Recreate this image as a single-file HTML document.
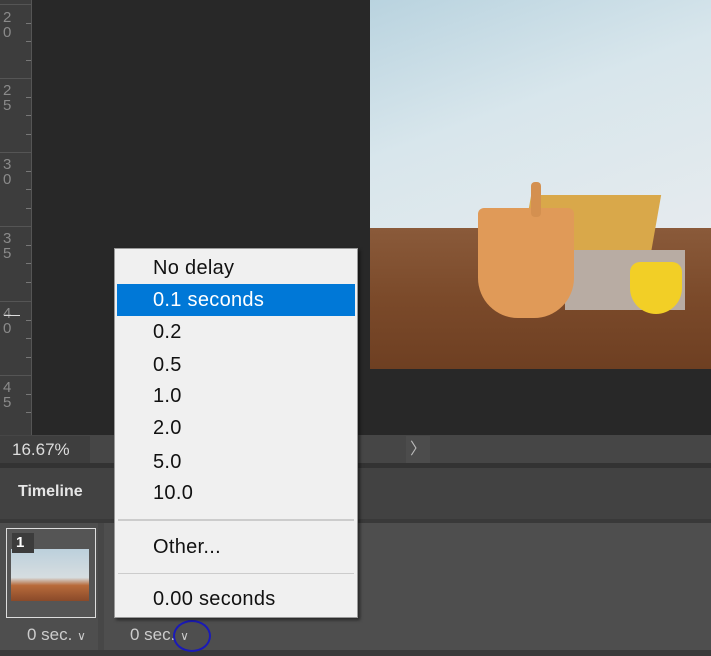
<!DOCTYPE html><html><head><style>
body{margin:0;width:711px;height:656px;overflow:hidden;background:#282828;font-family:"Liberation Sans",sans-serif;position:relative}
div{position:absolute;box-sizing:border-box}
.rl{color:#8a8a8a;font-size:15px;line-height:15px;left:3px;width:12px}
.tk{left:26px;width:5px;height:1px;background:#777}
.mj{left:0;width:32px;height:1px;background:#555}
.it{left:38px;font-size:20px;color:#111;height:32px;line-height:32px;letter-spacing:0.3px}
</style></head><body>
<div style="left:0;top:0;width:32px;height:435px;background:#3d3d3d"></div>
<div style="left:31px;top:0;width:1px;height:435px;background:#555"></div>
<div class="mj" style="top:4px"></div><div class="mj" style="top:78px"></div><div class="mj" style="top:152px"></div><div class="mj" style="top:226px"></div><div class="mj" style="top:301px"></div><div class="mj" style="top:375px"></div>
<div class="rl" style="top:10px">2<br>0</div><div class="rl" style="top:83px">2<br>5</div><div class="rl" style="top:157px">3<br>0</div><div class="rl" style="top:231px">3<br>5</div><div class="rl" style="top:306px">4<br>0</div><div class="rl" style="top:380px">4<br>5</div>
<div style="left:4px;top:315px;width:16px;height:1px;background:#ddd"></div>
<div class="tk" style="top:23px"></div><div class="tk" style="top:41px"></div><div class="tk" style="top:60px"></div>
<div class="tk" style="top:97px"></div><div class="tk" style="top:115px"></div><div class="tk" style="top:134px"></div>
<div class="tk" style="top:171px"></div><div class="tk" style="top:189px"></div><div class="tk" style="top:208px"></div>
<div class="tk" style="top:245px"></div><div class="tk" style="top:263px"></div><div class="tk" style="top:282px"></div>
<div class="tk" style="top:320px"></div><div class="tk" style="top:338px"></div><div class="tk" style="top:357px"></div>
<div class="tk" style="top:394px"></div><div class="tk" style="top:412px"></div>
<div style="left:370px;top:0;width:341px;height:232px;background:linear-gradient(160deg,#b9d3df 0%,#d8e6ec 45%,#e6ebee 100%)"></div>
<div style="left:370px;top:228px;width:341px;height:141px;background:linear-gradient(180deg,#8a5a3a 0%,#7b4a2a 50%,#6e3f22 100%)"></div>
<div style="left:525px;top:195px;width:130px;height:70px;background:#d9a84a;transform:skewX(-10deg)"></div>
<div style="left:565px;top:250px;width:120px;height:60px;background:#b8aca3"></div>
<div style="left:478px;top:208px;width:96px;height:110px;background:#e09a58;border-radius:6px 6px 40px 40px"></div>
<div style="left:531px;top:182px;width:10px;height:35px;background:#d49050;border-radius:4px"></div>
<div style="left:630px;top:262px;width:52px;height:52px;background:#f2cf26;border-radius:10px 10px 26px 26px"></div>
<div style="left:0;top:435px;width:711px;height:28px;background:#464646"></div>
<div style="left:0;top:436px;width:90px;height:27px;background:#3e3e3e;color:#ddd;font-size:17px;line-height:27px;padding-left:12px">16.67%</div>
<div style="left:406px;top:436px;width:24px;height:27px;background:#4c4c4c;color:#bbb;font-size:16px;line-height:27px;text-align:center">〉</div>
<div style="left:0;top:463px;width:711px;height:5px;background:#333"></div>
<div style="left:0;top:468px;width:711px;height:51px;background:#424242"></div>
<div style="left:18px;top:480px;color:#e6e6e6;font-size:16px;font-weight:bold;line-height:24px">Timeline</div>
<div style="left:0;top:519px;width:711px;height:4px;background:#393939"></div>
<div style="left:0;top:523px;width:711px;height:127px;background:#4e4e4e"></div>
<div style="left:0;top:650px;width:711px;height:6px;background:#3a3a3a"></div>
<div style="left:98px;top:523px;width:6px;height:127px;background:#474747"></div>
<div style="left:6px;top:528px;width:90px;height:90px;border:1px solid #ddd;background:#555"></div>
<div style="left:11px;top:549px;width:78px;height:52px;background:linear-gradient(180deg,#bcd0dc 0%,#d6dde0 55%,#b86a3a 70%,#8a4a2a 100%)"></div>
<div style="left:12px;top:533px;width:22px;height:20px;background:#3c3c3c;color:#fff;font-size:15px;font-weight:bold;line-height:20px;padding-left:4px">1</div>
<div style="left:27px;top:624px;color:#ccc;font-size:17px;line-height:22px">0 sec. <span style="font-size:12px">∨</span></div>
<div style="left:130px;top:624px;color:#ccc;font-size:17px;line-height:22px">0 sec. <span style="font-size:12px">∨</span></div>
<div style="left:173px;top:620px;width:38px;height:32px;border:2px solid #1a1ab8;border-radius:50%"></div>
<div style="left:114px;top:248px;width:244px;height:370px;background:#f0f0f0;border:1px solid #999;box-shadow:2px 2px 3px rgba(0,0,0,.5)">
<div style="left:2px;top:35px;width:238px;height:32px;background:#0078d7"></div>
<div class="it" style="top:3px">No delay</div>
<div class="it" style="top:35px;color:#fff">0.1 seconds</div>
<div class="it" style="top:67px">0.2</div>
<div class="it" style="top:100px">0.5</div>
<div class="it" style="top:131px">1.0</div>
<div class="it" style="top:163px">2.0</div>
<div class="it" style="top:197px">5.0</div>
<div class="it" style="top:228px">10.0</div>
<div style="left:3px;top:270px;width:236px;height:2px;background:#ccc"></div>
<div class="it" style="top:282px">Other...</div>
<div style="left:3px;top:324px;width:236px;height:1px;background:#ccc"></div>
<div class="it" style="top:334px">0.00 seconds</div>
</div>
</body></html>
